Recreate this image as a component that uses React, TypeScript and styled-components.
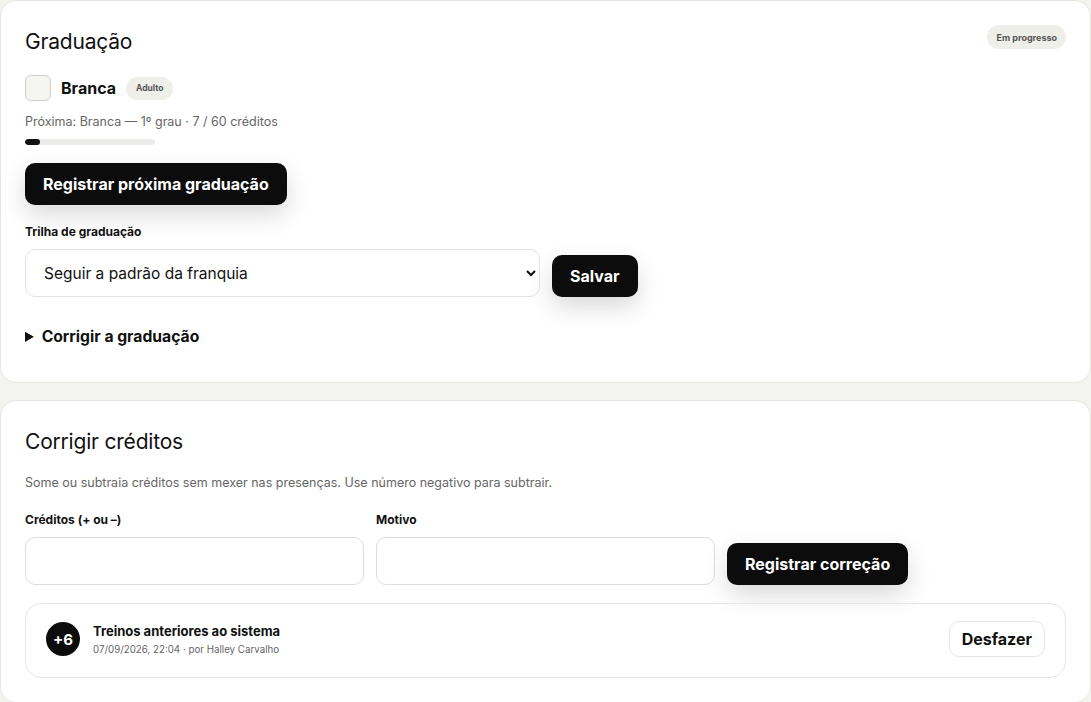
import React from "react";
import styled, { createGlobalStyle } from "styled-components";

const GlobalStyle = createGlobalStyle`
  * { box-sizing: border-box; }
  body {
    margin: 0;
    background: #f3f3ef;
    font-family: Inter, "Liberation Sans", Arial, sans-serif;
    color: #111;
  }
`;

const Page = styled.div`
  display: flex;
  flex-direction: column;
  gap: 17px;
  width: 1091px;
`;

const Card = styled.section<{ $bottom?: number }>`
  background: #fff;
  border: 1px solid #e6e6e1;
  border-radius: 16px;
  padding: 24px 24px ${(p) => p.$bottom ?? 24}px 24px;
  display: flex;
  flex-direction: column;
`;

const CardHeader = styled.div`
  display: flex;
  justify-content: space-between;
  align-items: flex-start;
`;

const Title = styled.h2`
  margin: 4px 0 0;
  font-size: 21px;
  font-weight: 400;
  letter-spacing: -0.2px;
`;

const Pill = styled.span<{ $small?: boolean }>`
  display: inline-flex;
  align-items: center;
  height: ${(p) => (p.$small ? "23px" : "24px")};
  padding: 0 ${(p) => (p.$small ? "10px" : "9px")};
  border-radius: 999px;
  background: #efefea;
  color: #555;
  font-size: ${(p) => (p.$small ? "8.5px" : "9px")};
  font-weight: 700;
`;

const BeltRow = styled.div`
  display: flex;
  align-items: center;
  gap: 10px;
  margin-top: 21px;
`;

const Swatch = styled.div`
  width: 26px;
  height: 26px;
  border-radius: 6px;
  border: 1px solid #cfcfca;
  background: #f5f5f2;
`;

const BeltName = styled.span`
  font-size: 16px;
  font-weight: 700;
`;

const Muted = styled.p<{ $size?: number; $mt?: number }>`
  margin: ${(p) => p.$mt ?? 0}px 0 0;
  font-size: ${(p) => p.$size ?? 12.5}px;
  color: #666;
`;

const Track = styled.div`
  width: 130px;
  height: 6px;
  border-radius: 3px;
  background: #ececea;
  margin-top: 10px;
  overflow: hidden;
`;

const Fill = styled.div`
  height: 100%;
  background: #111;
  border-radius: 3px;
`;

const DarkButton = styled.button`
  height: 42px;
  padding: 0 18px;
  border: none;
  border-radius: 10px;
  background: #0c0c0c;
  color: #fff;
  font-family: inherit;
  font-size: 16px;
  font-weight: 700;
  box-shadow: 0 10px 24px rgba(0, 0, 0, 0.15);
  flex-shrink: 0;
`;

const StartButton = styled(DarkButton)`
  align-self: flex-start;
  margin-top: 18px;
`;

const FieldGroup = styled.div`
  margin-top: 19px;
`;

const FieldLabel = styled.label`
  display: block;
  font-size: 12px;
  font-weight: 700;
  margin-bottom: 10px;
`;

const FormRow = styled.div<{ $mt?: number }>`
  display: flex;
  align-items: flex-end;
  gap: 12px;
  margin-top: ${(p) => p.$mt ?? 0}px;
`;

const Field = styled.div<{ $width: number }>`
  width: ${(p) => p.$width}px;
`;

const Select = styled.select`
  width: 100%;
  height: 48px;
  border: 1px solid #e2e2de;
  border-radius: 10px;
  background: #fff;
  padding: 0 14px;
  font-family: inherit;
  font-size: 15.5px;
  color: #111;
`;

const TextInput = styled.input`
  width: 100%;
  height: 48px;
  border: 1px solid #deded9;
  border-radius: 10px;
  background: #fff;
  padding: 0 14px;
  font-family: inherit;
  font-size: 15px;
`;

const Details = styled.details`
  margin-top: 30px;
  summary {
    font-size: 15.7px;
    font-weight: 700;
    cursor: pointer;
  }
`;

const Entry = styled.div`
  margin-top: 18px;
  border: 1px solid #e6e6e1;
  border-radius: 16px;
  padding: 17px 20px 20px 20px;
  display: flex;
  align-items: center;
  gap: 13px;
`;

const Amount = styled.div`
  width: 34px;
  height: 34px;
  border-radius: 50%;
  background: #0c0c0c;
  color: #fff;
  display: flex;
  align-items: center;
  justify-content: center;
  font-size: 15px;
  font-weight: 700;
`;

const EntryText = styled.div`
  flex: 1;
  display: flex;
  flex-direction: column;
  gap: 5px;
`;

const EntryTitle = styled.span`
  font-size: 13px;
  font-weight: 700;
`;

const GhostButton = styled.button`
  height: 36px;
  padding: 0 12px;
  border: 1px solid #e6e6e1;
  border-radius: 10px;
  background: #fff;
  font-family: inherit;
  font-size: 16px;
  font-weight: 700;
  color: #111;
`;

export default function App() {
  const credits = 7;
  const goal = 60;
  return (
    <>
      <GlobalStyle />
      <Page>
        <Card $bottom={36}>
          <CardHeader>
            <Title>Graduação</Title>
            <Pill>Em progresso</Pill>
          </CardHeader>
          <BeltRow>
            <Swatch />
            <BeltName>Branca</BeltName>
            <Pill $small>Adulto</Pill>
          </BeltRow>
          <Muted $mt={13}>Próxima: Branca — 1º grau · 7 / 60 créditos</Muted>
          <Track>
            <Fill style={{ width: `${(credits / goal) * 100}%` }} />
          </Track>
          <StartButton>Registrar próxima graduação</StartButton>
          <FieldGroup>
            <FieldLabel>Trilha de graduação</FieldLabel>
            <FormRow>
              <Field $width={515}>
                <Select defaultValue="franquia">
                  <option value="franquia">Seguir a padrão da franquia</option>
                </Select>
              </Field>
              <DarkButton>Salvar</DarkButton>
            </FormRow>
          </FieldGroup>
          <Details>
            <summary>Corrigir a graduação</summary>
          </Details>
        </Card>
        <Card>
          <Title>Corrigir créditos</Title>
          <Muted $mt={21}>
            Some ou subtraia créditos sem mexer nas presenças. Use número negativo para subtrair.
          </Muted>
          <FormRow $mt={22}>
            <Field $width={339}>
              <FieldLabel>Créditos (+ ou –)</FieldLabel>
              <TextInput />
            </Field>
            <Field $width={339}>
              <FieldLabel>Motivo</FieldLabel>
              <TextInput />
            </Field>
            <DarkButton>Registrar correção</DarkButton>
          </FormRow>
          <Entry>
            <Amount>+6</Amount>
            <EntryText>
              <EntryTitle>Treinos anteriores ao sistema</EntryTitle>
              <Muted $size={9.75}>07/09/2026, 22:04 · por Halley Carvalho</Muted>
            </EntryText>
            <GhostButton>Desfazer</GhostButton>
          </Entry>
        </Card>
      </Page>
    </>
  );
}
